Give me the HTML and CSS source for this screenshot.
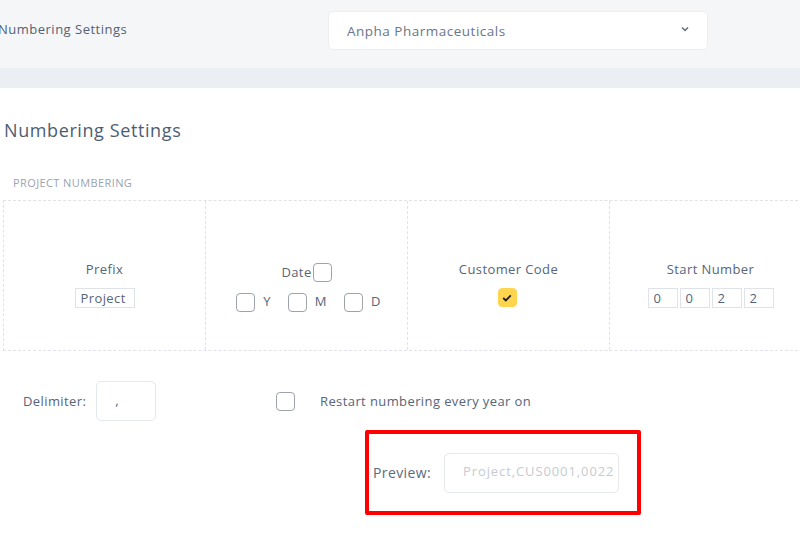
FILE: index.html
```html
<!DOCTYPE html>
<html>
<head>
<meta charset="utf-8">
<link rel="stylesheet" href="styles.css">
</head>
<body>
<div class="page">
  <header class="topbar">
    <div class="top-title">Numbering Settings</div>
    <div class="select">
      <span>Anpha Pharmaceuticals</span>
      <svg class="chev" width="8" height="6" viewBox="0 0 8 6"><path d="M1 1.5 L4 4.5 L7 1.5" fill="none" stroke="#5f6b7a" stroke-width="1.5"/></svg>
    </div>
  </header>
  <div class="band"></div>
  <main class="content">
    <h1 class="heading">Numbering Settings</h1>
    <div class="section-label">PROJECT NUMBERING</div>
    <div class="grid">
      <div class="cell">
        <div class="cell-label">Prefix</div>
        <div class="small-input prefix">Project</div>
      </div>
      <div class="cell">
        <div class="date-row"><span class="cell-label">Date</span><span class="cb"></span></div>
        <div class="ymd">
          <span class="cb"></span><span class="ymd-l">Y</span>
          <span class="cb"></span><span class="ymd-l">M</span>
          <span class="cb"></span><span class="ymd-l">D</span>
        </div>
      </div>
      <div class="cell">
        <div class="cell-label">Customer Code</div>
        <span class="cb checked"><svg width="10" height="8" viewBox="0 0 10 8"><path d="M1.2 4 L3.8 6.4 L8.8 1.4" fill="none" stroke="#1d1d1d" stroke-width="1.8"/></svg></span>
      </div>
      <div class="cell">
        <div class="cell-label">Start Number</div>
        <div class="digits">
          <span class="digit">0</span><span class="digit">0</span><span class="digit">2</span><span class="digit">2</span>
        </div>
      </div>
    </div>
    <div class="options">
      <div class="delim">
        <span class="opt-label">Delimiter:</span>
        <div class="delim-input">,</div>
      </div>
      <span class="cb restart-cb"></span>
      <span class="opt-label">Restart numbering every year on</span>
    </div>
    <div class="preview-box">
      <span class="preview-label">Preview:</span>
      <div class="preview-input">Project,CUS0001,0022</div>
    </div>
  </main>
</div>
</body>
</html>
```

FILE: styles.css
```css
* { box-sizing: border-box; }
html, body { margin: 0; padding: 0; }
body {
  font-family: "Open Sans", "DejaVu Sans", sans-serif;
  color: #56657a;
  background: #fff;
  width: 800px;
  height: 536px;
  overflow: hidden;
  letter-spacing: 0.4px;
}
.page { width: 800px; overflow: hidden; }
.topbar {
  height: 68px;
  background: #f5f6f8;
  display: flex;
  align-items: flex-start;
  padding-top: 11px;
}
.top-title {
  width: 330px;
  margin-left: -2px;
  font-size: 13px;
  line-height: 36px;
  color: #536175;
  letter-spacing: 0.5px;
}
.select {
  width: 380px;
  height: 39px;
  background: #fff;
  border: 1px solid #eceef1;
  border-radius: 5px;
  display: flex;
  align-items: center;
  justify-content: space-between;
  padding: 0 18px 0 18px;
  font-size: 13.5px;
  color: #6b7687;
  letter-spacing: 0.5px;
}
.chev { margin-top: -4px; }
.band { height: 20px; background: #ebeef2; }
.content { padding: 0; }
.heading {
  margin: 0;
  padding: 30px 0 0 4px;
  font-size: 18px;
  font-weight: 400;
  color: #4d5d71;
  line-height: 25px;
  letter-spacing: 0.6px;
}
.section-label {
  margin: 33px 0 0 13px;
  font-size: 11px;
  color: #9aa3b0;
  line-height: 14px;
  letter-spacing: 0.4px;
}
.grid {
  margin: 10px 0 0 3px;
  display: flex;
  width: 830px;
  border-top: 1px dashed #dfe2e6;
  border-bottom: 1px dashed #dfe2e6;
  border-left: 1px dashed #dfe2e6;
  height: 151px;
}
.cell {
  width: 202px;
  flex: 0 0 202px;
  border-right: 1px dashed #dfe2e6;
  display: flex;
  flex-direction: column;
  align-items: center;
  padding-top: 60px;
}
.cell-label {
  font-size: 13px;
  line-height: 17px;
  color: #56657a;
}
.small-input {
  margin-top: 10px;
  border: 1px solid #dfe3e8;
  height: 20px;
  font-size: 13px;
  line-height: 18px;
  color: #56657a;
}
.prefix { width: 60px; padding-left: 5px; }
.date-row { display: flex; align-items: center; gap: 1px; margin-top: 2px; }
.cb {
  display: inline-flex;
  align-items: center;
  justify-content: center;
  width: 19px;
  height: 19px;
  border: 1px solid #9ea3aa;
  border-radius: 4px;
  background: #fff;
}
.cb.checked {
  margin-top: 10px;
  margin-left: -3px;
  background: #ffd54f;
  border-color: #ffd54f;
}
.ymd { display: flex; align-items: center; margin-top: 11px; margin-left: 4px; }
.ymd-l { font-size: 13px; margin: -3px 17px 0 8px; color: #56657a; }
.ymd-l:last-child { margin-right: 0; }
.digits { display: flex; gap: 2px; margin-top: 10px; }
.digit {
  width: 30px;
  height: 20px;
  border: 1px solid #dfe3e8;
  font-size: 13px;
  line-height: 18px;
  padding-left: 5px;
  color: #56657a;
}
.options {
  display: flex;
  align-items: center;
  margin-top: 30px;
  height: 40px;
}
.delim { display: flex; align-items: center; margin-left: 23px; width: 253px; }
.opt-label { font-size: 13px; color: #56657a; }
.delim-input {
  margin-left: 10px;
  width: 60px;
  height: 40px;
  border: 1px solid #e4e7ed;
  border-radius: 5px;
  font-size: 13px;
  padding: 9px 0 0 18px;
}
.restart-cb { margin-right: 25px; }
.preview-box {
  margin: 9px 0 0 365px;
  width: 276px;
  height: 85px;
  border: 4px solid #ff0000;
  border-radius: 2px;
  display: flex;
  align-items: center;
  padding-left: 4px;
}
.preview-label { font-size: 14px; color: #5b6a7d; width: 71px; }
.preview-input {
  width: 175px;
  height: 40px;
  border: 1px solid #e4e7ed;
  border-radius: 5px;
  font-size: 13px;
  color: #c6cbd2;
  padding: 8px 4px 0 18px;
  letter-spacing: 0.9px;
  white-space: nowrap;
  overflow: hidden;
}
```
